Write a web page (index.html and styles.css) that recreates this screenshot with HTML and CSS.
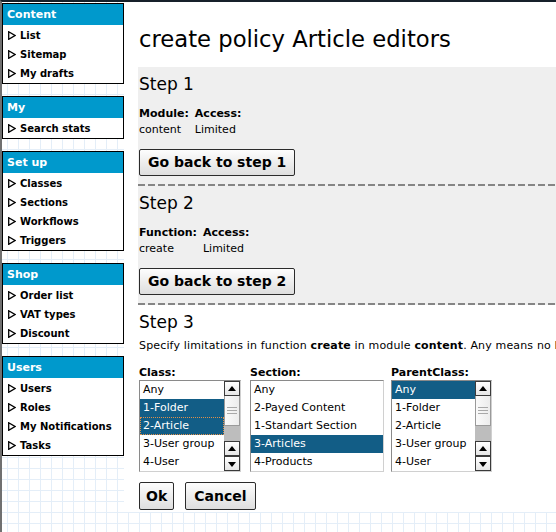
FILE: index.html
```html
<!DOCTYPE html>
<html lang="en">
<head>
<meta charset="utf-8">
<title>create policy Article editors</title>
<link rel="stylesheet" href="styles.css">
</head>
<body>
<div class="page">
  <nav class="sidebar">
    <div class="menu">
      <div class="menu-head">Content</div>
      <ul class="menu-list">
        <li><svg class="tri" viewBox="0 0 8 9" width="8" height="9"><polygon points="0.7,0.7 7,4.5 0.7,8.3"/></svg>List</li>
        <li><svg class="tri" viewBox="0 0 8 9" width="8" height="9"><polygon points="0.7,0.7 7,4.5 0.7,8.3"/></svg>Sitemap</li>
        <li><svg class="tri" viewBox="0 0 8 9" width="8" height="9"><polygon points="0.7,0.7 7,4.5 0.7,8.3"/></svg>My drafts</li>
      </ul>
    </div>
    <div class="menu">
      <div class="menu-head">My</div>
      <ul class="menu-list">
        <li><svg class="tri" viewBox="0 0 8 9" width="8" height="9"><polygon points="0.7,0.7 7,4.5 0.7,8.3"/></svg>Search stats</li>
      </ul>
    </div>
    <div class="menu">
      <div class="menu-head">Set up</div>
      <ul class="menu-list">
        <li><svg class="tri" viewBox="0 0 8 9" width="8" height="9"><polygon points="0.7,0.7 7,4.5 0.7,8.3"/></svg>Classes</li>
        <li><svg class="tri" viewBox="0 0 8 9" width="8" height="9"><polygon points="0.7,0.7 7,4.5 0.7,8.3"/></svg>Sections</li>
        <li><svg class="tri" viewBox="0 0 8 9" width="8" height="9"><polygon points="0.7,0.7 7,4.5 0.7,8.3"/></svg>Workflows</li>
        <li><svg class="tri" viewBox="0 0 8 9" width="8" height="9"><polygon points="0.7,0.7 7,4.5 0.7,8.3"/></svg>Triggers</li>
      </ul>
    </div>
    <div class="menu">
      <div class="menu-head">Shop</div>
      <ul class="menu-list">
        <li><svg class="tri" viewBox="0 0 8 9" width="8" height="9"><polygon points="0.7,0.7 7,4.5 0.7,8.3"/></svg>Order list</li>
        <li><svg class="tri" viewBox="0 0 8 9" width="8" height="9"><polygon points="0.7,0.7 7,4.5 0.7,8.3"/></svg>VAT types</li>
        <li><svg class="tri" viewBox="0 0 8 9" width="8" height="9"><polygon points="0.7,0.7 7,4.5 0.7,8.3"/></svg>Discount</li>
      </ul>
    </div>
    <div class="menu">
      <div class="menu-head">Users</div>
      <ul class="menu-list">
        <li><svg class="tri" viewBox="0 0 8 9" width="8" height="9"><polygon points="0.7,0.7 7,4.5 0.7,8.3"/></svg>Users</li>
        <li><svg class="tri" viewBox="0 0 8 9" width="8" height="9"><polygon points="0.7,0.7 7,4.5 0.7,8.3"/></svg>Roles</li>
        <li><svg class="tri" viewBox="0 0 8 9" width="8" height="9"><polygon points="0.7,0.7 7,4.5 0.7,8.3"/></svg>My Notifications</li>
        <li><svg class="tri" viewBox="0 0 8 9" width="8" height="9"><polygon points="0.7,0.7 7,4.5 0.7,8.3"/></svg>Tasks</li>
      </ul>
    </div>
  </nav>

  <main class="main">
    <h1 class="title">create policy Article editors</h1>

    <section class="step step-done">
      <h2 class="step-title">Step 1</h2>
      <table class="info">
        <tr><th>Module:</th><th>Access:</th></tr>
        <tr><td>content</td><td>Limited</td></tr>
      </table>
      <button class="btn btn-back" type="button">Go back to step 1</button>
    </section>

    <section class="step step-done">
      <h2 class="step-title">Step 2</h2>
      <table class="info">
        <tr><th>Function:</th><th>Access:</th></tr>
        <tr><td>create</td><td>Limited</td></tr>
      </table>
      <button class="btn btn-back" type="button">Go back to step 2</button>
    </section>

    <section class="step step-current">
      <h2 class="step-title">Step 3</h2>
      <p class="hint">Specify limitations in function <b>create</b> in module <b>content</b>. Any means no limitation by this parameter.</p>

      <div class="limits">
        <div class="limit limit-class">
          <div class="limit-label">Class:</div>
          <div class="listbox">
            <ul class="options">
              <li>Any</li>
              <li class="sel">1-Folder</li>
              <li class="sel focus">2-Article</li>
              <li>3-User group</li>
              <li>4-User</li>
            </ul>
            <div class="sbar">
              <span class="sb-btn up"></span>
              <span class="sb-thumb"></span>
              <span class="sb-track"></span>
              <span class="sb-btn up"></span>
              <span class="sb-btn down"></span>
            </div>
          </div>
        </div>
        <div class="limit limit-section">
          <div class="limit-label">Section:</div>
          <div class="listbox">
            <ul class="options">
              <li>Any</li>
              <li>2-Payed Content</li>
              <li>1-Standart Section</li>
              <li class="sel">3-Articles</li>
              <li>4-Products</li>
            </ul>
          </div>
        </div>
        <div class="limit limit-parent">
          <div class="limit-label">ParentClass:</div>
          <div class="listbox">
            <ul class="options">
              <li class="sel">Any</li>
              <li>1-Folder</li>
              <li>2-Article</li>
              <li>3-User group</li>
              <li>4-User</li>
            </ul>
            <div class="sbar">
              <span class="sb-btn up"></span>
              <span class="sb-thumb"></span>
              <span class="sb-track"></span>
              <span class="sb-btn up"></span>
              <span class="sb-btn down"></span>
            </div>
          </div>
        </div>
      </div>

      <div class="actions">
        <button class="btn btn-small btn-ok" type="button">Ok</button>
        <button class="btn btn-small btn-cancel" type="button">Cancel</button>
      </div>
    </section>
  </main>
</div>
</body>
</html>
```

FILE: styles.css
```css
* { box-sizing: border-box; }

html, body {
  margin: 0;
  padding: 0;
  height: 100%;
  overflow: hidden;
}

body {
  font-family: "DejaVu Sans", Verdana, sans-serif;
  color: #000;
  background-color: #fff;
  background-image:
    linear-gradient(to right, #e4eef8 1px, transparent 1px),
    linear-gradient(to bottom, #e4eef8 1px, transparent 1px);
  background-size: 11px 11px;
  background-position: 7px 6px;
}

.page {
  display: flex;
  align-items: flex-start;
  min-height: 100%;
  border-top: 2px solid #16202a;
  border-left: 2px solid #707070;
}

/* ---------- sidebar ---------- */
.sidebar {
  width: 122px;
  flex: none;
  padding-top: 1px;
}

.menu {
  border: 1px solid #000;
  background: #fff;
  margin-bottom: 12px;
}

.menu-head {
  background: #0099cc;
  color: #fff;
  font-weight: bold;
  font-size: 11px;
  line-height: 21px;
  padding-left: 4px;
}

.menu-list {
  list-style: none;
  margin: 0;
  padding: 1px 0 0;
}

.menu-list li {
  display: flex;
  align-items: center;
  height: 19px;
  padding-left: 5px;
  font-weight: bold;
  font-size: 10px;
  white-space: nowrap;
}

.tri {
  flex: none;
  margin-right: 4px;
}

.tri polygon {
  fill: #fff;
  stroke: #000;
  stroke-width: 1.3;
}

/* ---------- main ---------- */
.main {
  flex: 1;
  min-width: 0;
  overflow: hidden;
  background: #fff;
  padding: 0 0 2px 14px;
}

.title {
  font-size: 22.7px;
  font-weight: normal;
  line-height: 26px;
  margin: 24px 0 15px 1px;
  white-space: nowrap;
}

.step {
  padding: 5px 1px 10px;
}

.step-done {
  background-color: #efefef;
  background-image: repeating-linear-gradient(to right, #858585 0 7px, transparent 7px 10px);
  background-size: 100% 2px;
  background-position: left bottom;
  background-repeat: no-repeat;
}

.step-current {
  padding-bottom: 0;
}

.step-title {
  font-size: 17px;
  font-weight: normal;
  line-height: 24px;
  margin: 0;
}

.info {
  border-collapse: collapse;
  margin-top: 10px;
  font-size: 11px;
}

.info th,
.info td {
  text-align: left;
  padding: 0 6px 0 0;
  height: 16px;
  line-height: 16px;
  white-space: nowrap;
}

.btn {
  display: block;
  font-family: "DejaVu Sans", Verdana, sans-serif;
  font-weight: bold;
  font-size: 14px;
  color: #000;
  border: 1px solid #2b2b2b;
  border-radius: 2px;
  background: linear-gradient(#fdfdfd, #dedede);
  padding: 0 8px;
  margin: 0;
}

.btn-back {
  margin-top: 11px;
  height: 27px;
  line-height: 25px;
}

.hint {
  margin: 4px 0 0;
  font-size: 11px;
  line-height: 16px;
  letter-spacing: 0.15px;
  white-space: nowrap;
}

.limits {
  display: flex;
  margin-top: 11px;
}

.limit-label {
  font-size: 11px;
  font-weight: bold;
  line-height: 15px;
}

.limit-class { width: 102px; margin-right: 9px; }
.limit-section { width: 134px; margin-right: 7px; }
.limit-parent { width: 101px; }

.listbox {
  display: flex;
  height: 92px;
  border: 1px solid;
  border-color: #8a8a8a #d0d0d0 #d0d0d0 #8a8a8a;
  background: #fff;
}

.options {
  list-style: none;
  margin: 0;
  padding: 0;
  flex: 1;
  min-width: 0;
}

.options li {
  height: 18px;
  line-height: 18px;
  font-size: 11px;
  padding-left: 3px;
  white-space: nowrap;
  overflow: hidden;
}

.options li.sel {
  background: #125d86;
  color: #fff;
}

.options li.focus {
  outline: 1px dotted #e0904a;
  outline-offset: -1px;
}

.sbar {
  width: 16px;
  flex: none;
  display: flex;
  flex-direction: column;
}

.sb-btn {
  position: relative;
  height: 15px;
  border: 1px solid #3a3a3a;
  background: linear-gradient(#ffffff, #e6e6e6);
}

.sb-btn::after {
  content: "";
  position: absolute;
  left: 3px;
  top: 4px;
  border-left: 4px solid transparent;
  border-right: 4px solid transparent;
}

.sb-btn.up::after { border-bottom: 5px solid #000; }
.sb-btn.down::after { border-top: 5px solid #000; top: 5px; }

.sb-thumb {
  position: relative;
  height: 30px;
  border: 1px solid #9a9a9a;
  border-top: 0;
  background: linear-gradient(to right, #fafafa, #ececec);
}

.sb-thumb::after {
  content: "";
  position: absolute;
  left: 2px;
  right: 2px;
  top: 11px;
  height: 7px;
  background: repeating-linear-gradient(to bottom, #a8a8a8 0 1px, transparent 1px 3px);
}

.sb-track {
  height: 15px;
  background: #bdbdbd;
}

.actions {
  display: flex;
  gap: 11px;
  margin-top: 10px;
}

.btn-small {
  height: 28px;
  line-height: 26px;
}

.btn-ok { padding: 0 6px; }
.btn-cancel { padding: 0 8px; }
```
